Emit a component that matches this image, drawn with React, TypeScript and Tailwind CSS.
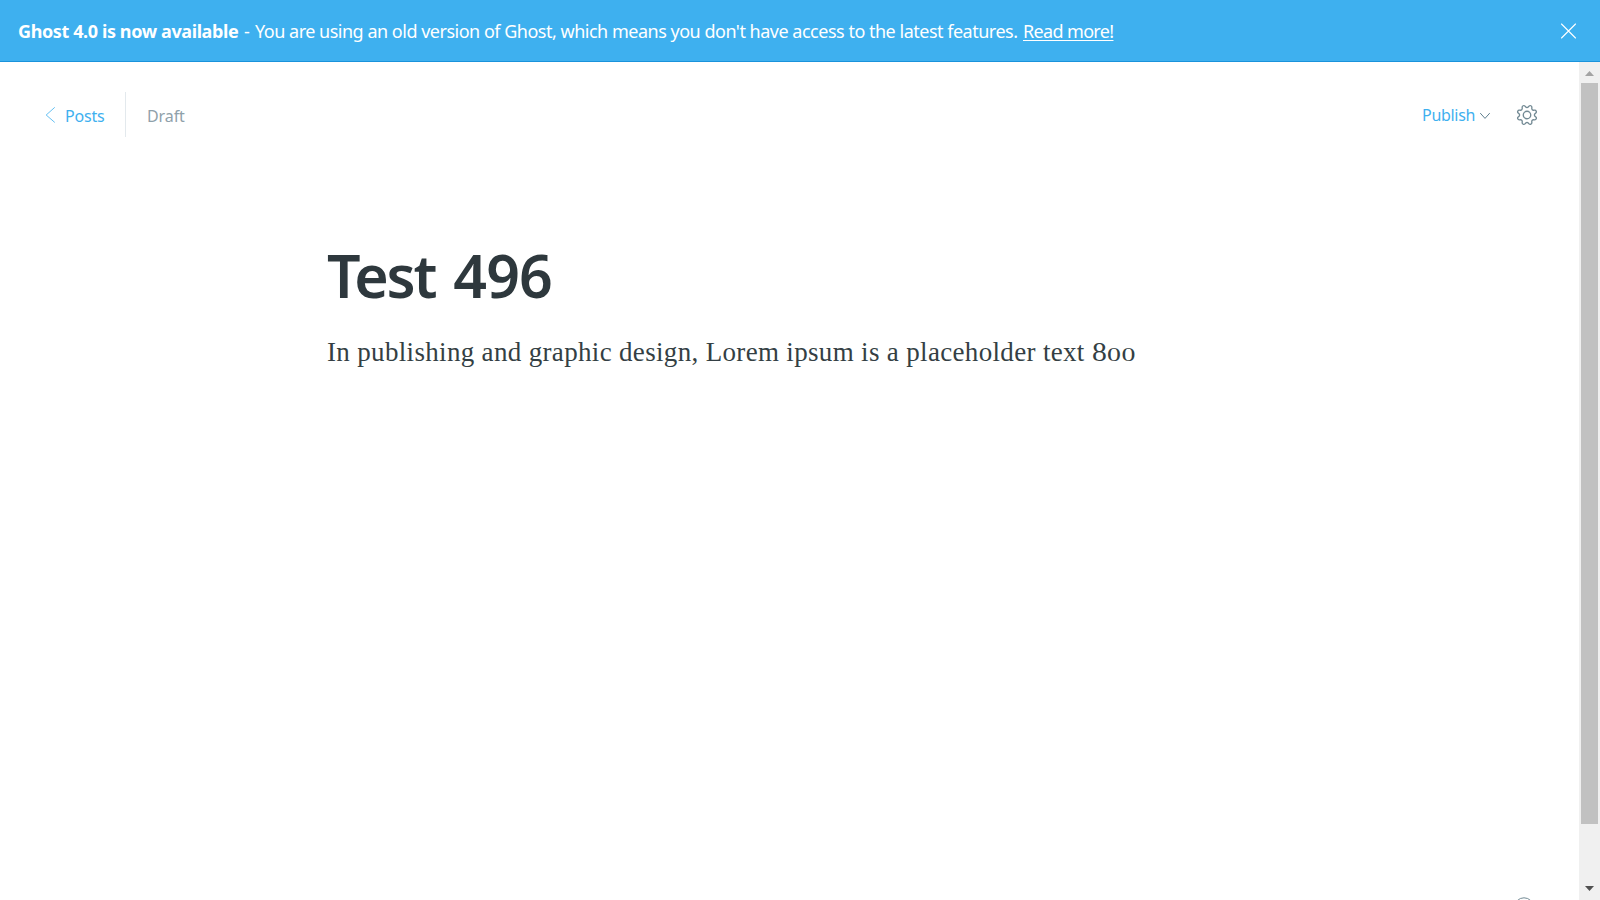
function CloseIcon() {
  return (
    <svg className="h-4 w-4" viewBox="0 0 16 16" fill="none" stroke="white" strokeWidth="1.1" strokeLinecap="round">
      <path d="M.5 1l14 14M14.5 1L.5 15" />
    </svg>
  );
}

function BackIcon() {
  return (
    <svg className="h-4 w-2.5 shrink-0" viewBox="0 0 10 16" fill="none" stroke="#3eb0ef" strokeWidth="0.8" strokeLinecap="round" strokeLinejoin="round">
      <path d="M9.5 .6L1.2 8l8.3 7.2" />
    </svg>
  );
}

function ChevronDown() {
  return (
    <svg className="mt-0.5 h-2 w-2.5 shrink-0" viewBox="0 0 10 8" fill="none" stroke="#5f7f8e" strokeWidth="1" strokeLinecap="round" strokeLinejoin="round">
      <path d="M.5 1.4L5 6.4l4.5-5" />
    </svg>
  );
}

function GearIcon() {
  return (
    <svg className="mt-px h-5 w-5 shrink-0 overflow-visible" viewBox="0 0 24 24" fill="none" stroke="#738a94" strokeWidth="1.6" strokeLinejoin="round">
      <circle cx="12" cy="12" r="4.5" />
      <path d="M10.546 2.438a1.957 1.957 0 0 0 2.908 0L14.4 1.4a1.959 1.959 0 0 1 3.41 1.413l-.071 1.4A1.958 1.958 0 0 0 19.79 6.27l1.4-.071A1.959 1.959 0 0 1 22.6 9.606l-1.041.94a1.962 1.962 0 0 0 0 2.909l1.041.94a1.959 1.959 0 0 1-1.413 3.41l-1.4-.071a1.958 1.958 0 0 0-2.056 2.056l.071 1.4A1.959 1.959 0 0 1 14.4 22.6l-.941-1.041a1.959 1.959 0 0 0-2.908 0L9.606 22.6A1.959 1.959 0 0 1 6.2 21.192l.072-1.4a1.958 1.958 0 0 0-2.056-2.056l-1.4.071A1.958 1.958 0 0 1 1.4 14.4l1.041-.94a1.96 1.96 0 0 0 0-2.909L1.4 9.606A1.958 1.958 0 0 1 2.813 6.2l1.4.071a1.958 1.958 0 0 0 2.056-2.06L6.2 2.81a1.959 1.959 0 0 1 3.406-1.41z" />
    </svg>
  );
}

function Banner() {
  return (
    <header className="flex h-[62px] shrink-0 items-center justify-between border-b border-[#1b93db] bg-[#3eb0ef] pr-[23px] pl-[18px] text-lg text-white">
      <p className="flex whitespace-nowrap">
        <b className="w-[226px] font-bold tracking-[-0.39px]">Ghost 4.0 is now available</b>
        <span className="w-[11px]">-</span>
        <span className="w-[768px] tracking-[-0.49px]">You are using an old version of Ghost, which means you don't have access to the latest features.</span>
        <a className="tracking-[-0.65px] underline underline-offset-2">Read more!</a>
      </p>
      <CloseIcon />
    </header>
  );
}

function Scrollbar() {
  return (
    <div className="flex w-[21px] shrink-0 flex-col items-center bg-[#f0f0f0]">
      <svg className="h-[21px] w-[21px] shrink-0" viewBox="0 0 21 21">
        <path d="M6 14l4.5-5 4.5 5z" fill="#a3a3a3" />
      </svg>
      <div className="h-[741px] w-[17px] bg-[#c1c1c1]" />
      <svg className="mt-auto h-[21px] w-[21px] shrink-0" viewBox="0 0 21 21">
        <path d="M6 7l4.5 5L15 7z" fill="#505050" />
      </svg>
    </div>
  );
}

export default function App() {
  return (
    <div className="flex h-[900px] w-[1600px] flex-col overflow-hidden bg-white font-['Noto_Sans',sans-serif]">
      <Banner />
      <div className="flex min-h-0 flex-1">
        <main className="flex flex-1 flex-col overflow-hidden">
          <nav className="mt-[30px] flex h-[45px] shrink-0 items-center justify-between pr-[42px] pl-[45px]">
            <div className="flex h-full items-center">
              <a className="flex w-20 items-center gap-2.5 text-base text-[#3eb0ef]">
                <BackIcon />
                <span className="pt-0.5 tracking-[-0.2px]">Posts</span>
              </a>
              <div className="h-full w-px bg-[#e3e9ed]" />
              <span className="pt-0.5 pl-[21px] text-base tracking-[-0.1px] text-[#8fa1aa]">Draft</span>
            </div>
            <div className="flex items-center">
              <button className="flex w-[95px] items-center text-base text-[#3eb0ef]">
                <span className="w-[58px] pt-px text-left tracking-[-0.3px]">Publish</span>
                <ChevronDown />
              </button>
              <GearIcon />
            </div>
          </nav>
          <article className="ml-[327px] flex flex-col pt-[93px] whitespace-nowrap">
            <h1 className="text-[59px] leading-[90px] font-[560] tracking-[-2.2px] [word-spacing:5px] text-[#2e383d]">
              Test <span className="tracking-[-0.9px]">496</span>
            </h1>
            <p className="mt-3 font-['Liberation_Serif',serif] text-[27px] leading-10 tracking-[0.33px] text-[#343f44]">
              In publishing and graphic design, Lorem ipsum is a placeholder text <span className="inline-block w-[15.5px] origin-left scale-x-110">8</span><span className="inline-block origin-left scale-x-[1.55] text-[18px]">00</span>
            </p>
          </article>
          <div className="mt-auto flex h-[3px] justify-end overflow-hidden pr-[45px]">
            <svg className="h-5 w-5 shrink-0" viewBox="0 0 20 20" fill="none" stroke="#738a94">
              <circle cx="10" cy="10.3" r="9.5" />
            </svg>
          </div>
        </main>
        <Scrollbar />
      </div>
    </div>
  );
}
